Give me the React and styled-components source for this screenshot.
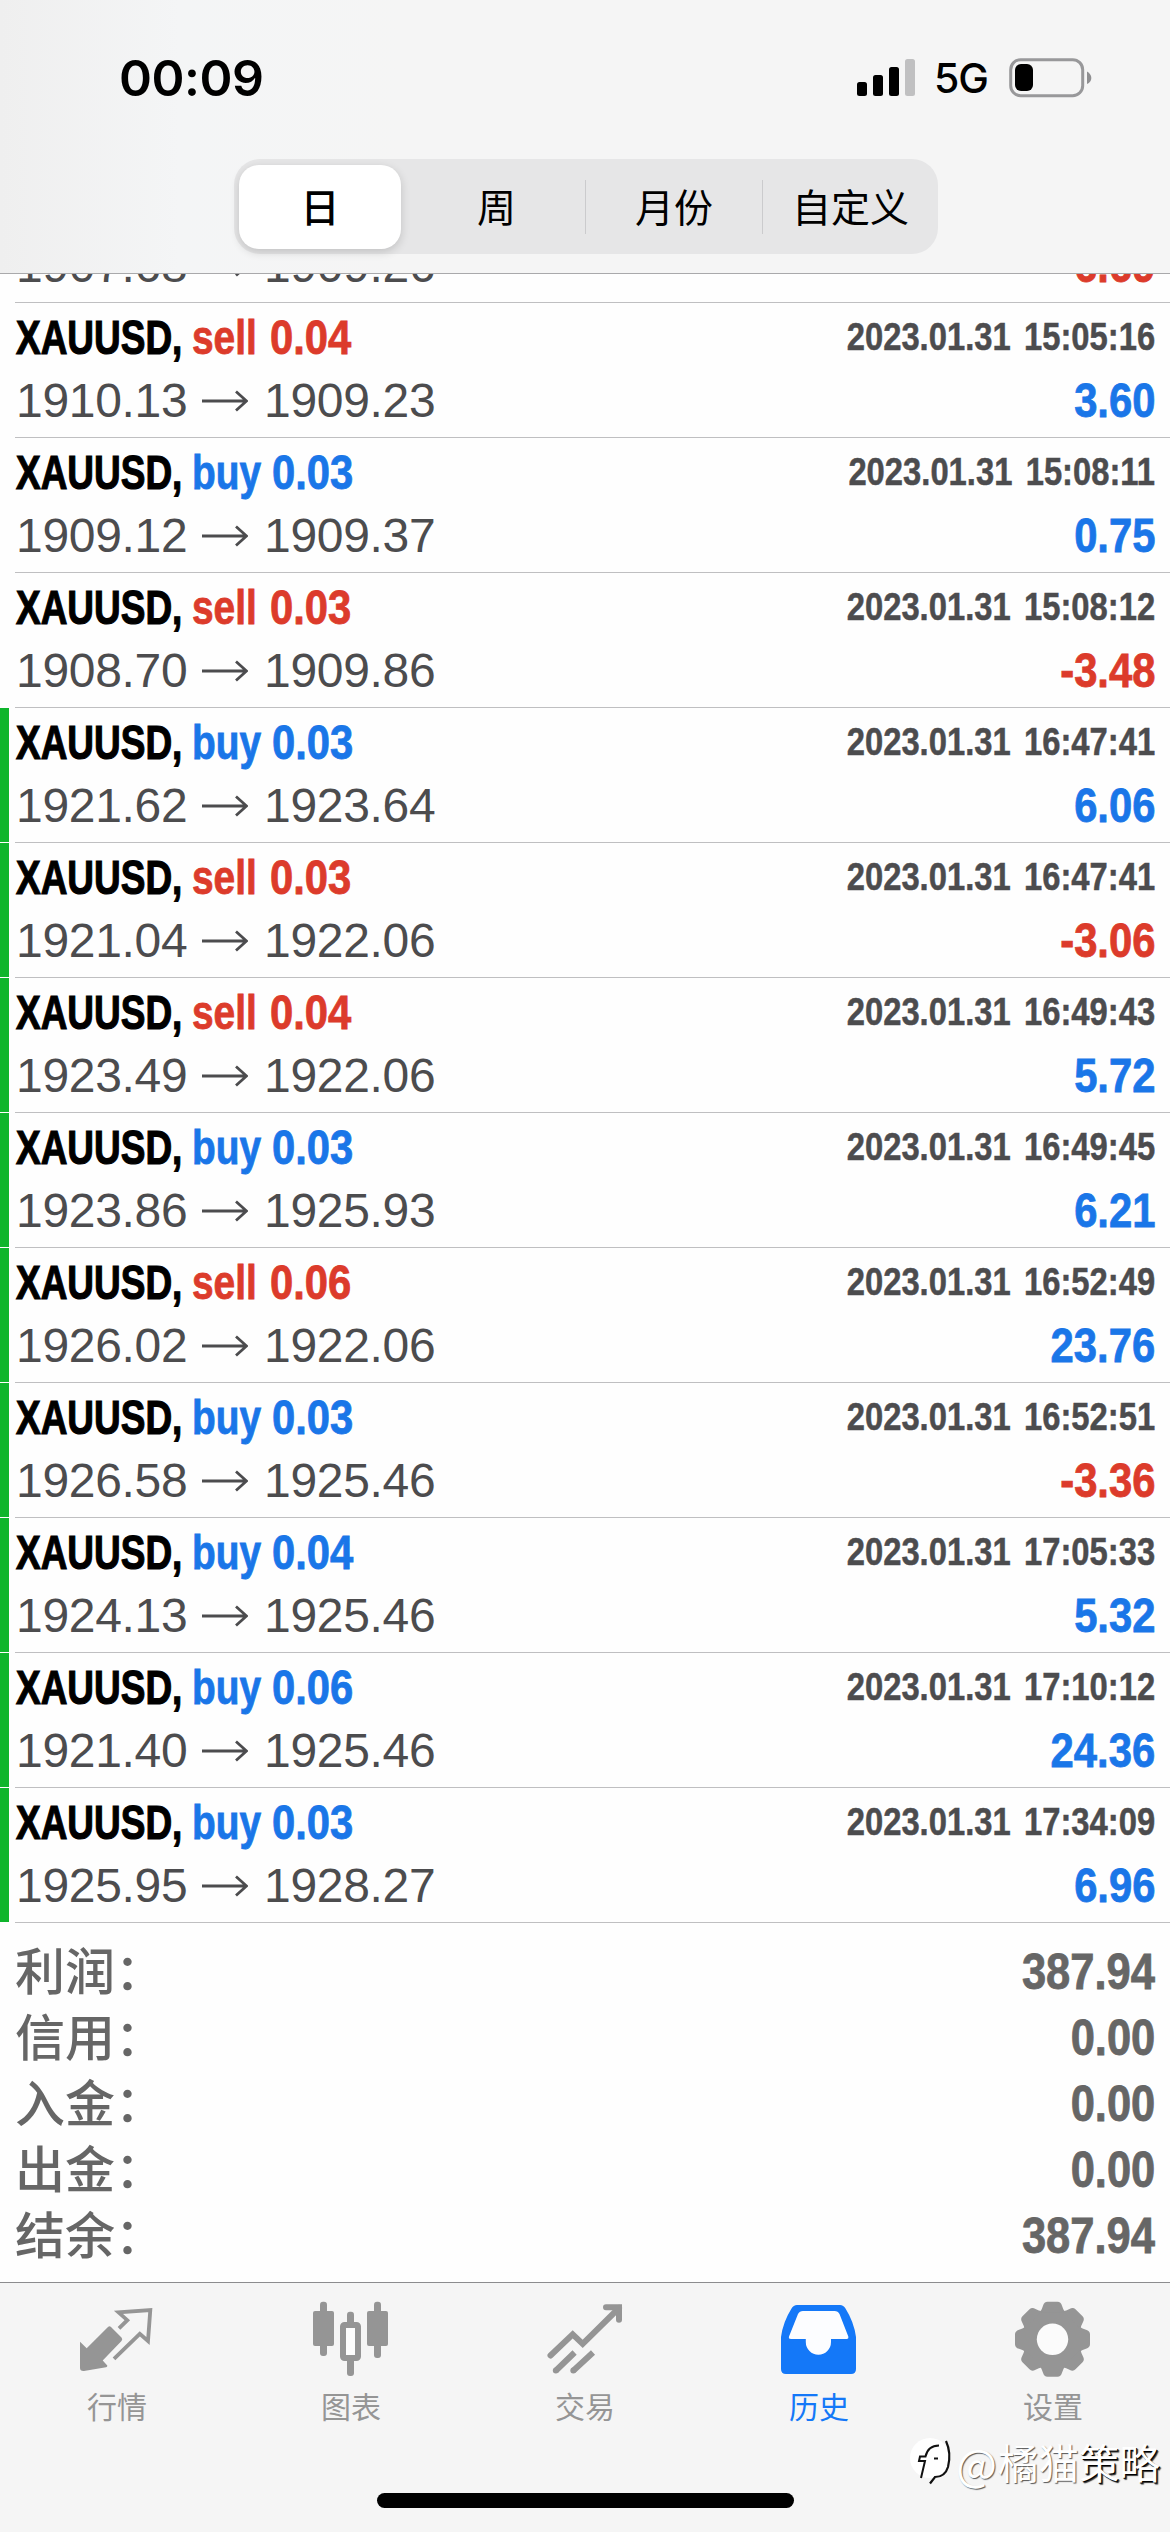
import React from 'react'
import styled, { createGlobalStyle } from 'styled-components'

const BLUE = '#1a76e8'
const RED = '#dc3b2b'

const periods = ['日', '周', '月份', '自定义']

const deals = [
    { side: 'sell', volume: '0.04', open: '1910.13', close: '1909.23', time: '2023.01.31 15:05:16', profit: '3.60' },
    { side: 'buy', volume: '0.03', open: '1909.12', close: '1909.37', time: '2023.01.31 15:08:11', profit: '0.75' },
    { side: 'sell', volume: '0.03', open: '1908.70', close: '1909.86', time: '2023.01.31 15:08:12', profit: '-3.48' },
    { side: 'buy', volume: '0.03', open: '1921.62', close: '1923.64', time: '2023.01.31 16:47:41', profit: '6.06', tp: true },
    { side: 'sell', volume: '0.03', open: '1921.04', close: '1922.06', time: '2023.01.31 16:47:41', profit: '-3.06', tp: true },
    { side: 'sell', volume: '0.04', open: '1923.49', close: '1922.06', time: '2023.01.31 16:49:43', profit: '5.72', tp: true },
    { side: 'buy', volume: '0.03', open: '1923.86', close: '1925.93', time: '2023.01.31 16:49:45', profit: '6.21', tp: true },
    { side: 'sell', volume: '0.06', open: '1926.02', close: '1922.06', time: '2023.01.31 16:52:49', profit: '23.76', tp: true },
    { side: 'buy', volume: '0.03', open: '1926.58', close: '1925.46', time: '2023.01.31 16:52:51', profit: '-3.36', tp: true },
    { side: 'buy', volume: '0.04', open: '1924.13', close: '1925.46', time: '2023.01.31 17:05:33', profit: '5.32', tp: true },
    { side: 'buy', volume: '0.06', open: '1921.40', close: '1925.46', time: '2023.01.31 17:10:12', profit: '24.36', tp: true },
    { side: 'buy', volume: '0.03', open: '1925.95', close: '1928.27', time: '2023.01.31 17:34:09', profit: '6.96', tp: true }
]

const totals = [
    { label: '利润', value: '387.94' },
    { label: '信用', value: '0.00' },
    { label: '入金', value: '0.00' },
    { label: '出金', value: '0.00' },
    { label: '结余', value: '387.94' }
]

const QuotesIcon = () => (
    <Glyph viewBox='0 0 76 78'>
        <path d='M1 41.7 L7.7 48.3 L29 27 Q30.5 25.5 32 27 L42.5 37.5 Q44 39.3 42.5 41 L23.7 60.5 L28.3 65.5 Q28.5 67 27 67.3 L5 71 Q1 71.3 1 68 Z' fill='currentColor' />
        <path d='M40 28.3 L48.3 20.2 L39.5 12.4 L71.3 10 L69 41 L60.8 33.8 L35 58.8' fill='none' stroke='currentColor' strokeWidth='3.8' />
    </Glyph>
)

const ChartIcon = () => (
    <Glyph viewBox='0 0 76 78'>
        <g fill='currentColor'>
            <rect x='0' y='11' width='21' height='35' rx='2' />
            <rect x='7' y='1.7' width='7' height='54.3' rx='3' />
            <rect x='54' y='11' width='21' height='35' rx='2' />
            <rect x='61' y='1.7' width='7' height='56.3' rx='3' />
            <rect x='34' y='11.7' width='7' height='14' rx='3' />
            <rect x='34' y='58' width='7' height='18' rx='3' />
        </g>
        <rect x='30' y='25' width='15' height='33' rx='1.5' fill='#fdfdfd' stroke='currentColor' strokeWidth='6' />
    </Glyph>
)

const TradeIcon = () => (
    <Glyph viewBox='0 0 76 78'>
        <g fill='none' stroke='currentColor' strokeWidth='6'>
            <path d='M3.5 55.5 L25.7 34.3 L35.7 43.8 L72 8' strokeLinecap='round' />
            <path d='M59 7.2 H72 V19.8' strokeLinecap='round' />
            <path d='M9 70.5 L27.6 52.5 M26.5 70.5 L46 52.5' />
        </g>
        <circle cx='8.8' cy='70.6' r='3' fill='currentColor' />
        <circle cx='26.3' cy='70.6' r='3' fill='currentColor' />
    </Glyph>
)

const HistoryIcon = () => (
    <Glyph viewBox='0 0 76 78'>
        <path d='M16 5 H59 Q62.5 5 64.5 8.5 Q73 22 75 37 V69 Q75 74 70 74 H5 Q0 74 0 69 V37 Q2 22 10.5 8.5 Q12.5 5 16 5 Z' fill='currentColor' />
        <path d='M22 11 H53.5 Q57 11 58.5 14 L67.3 36.5 Q67.8 39 65.5 39 H50 V42 A12.6 12.7 0 0 1 24.8 42 V39 H10 Q7.3 39 8 36.5 L17 14 Q18.5 11 22 11 Z' fill='#fcfdff' />
    </Glyph>
)

const SettingsIcon = () => (
    <Glyph viewBox='0 0 76 78'>
        <g transform='translate(37.5 39.3)' fill='currentColor'>
            <circle r='30' />
            {[0, 45, 90, 135, 180, 225, 270, 315].map(angle => (
                <path key={angle} transform={`rotate(${angle})`} d='M-12.5 -27 Q-10.5 -30 -9.5 -33.5 Q-8.4 -37.5 -5 -37.5 H5 Q8.4 -37.5 9.5 -33.5 Q10.5 -30 12.5 -27 Z' />
            ))}
            <circle r='15.7' fill='#fbfbfb' />
        </g>
    </Glyph>
)

const tabs = [
    { label: '行情', Icon: QuotesIcon },
    { label: '图表', Icon: ChartIcon },
    { label: '交易', Icon: TradeIcon },
    { label: '历史', Icon: HistoryIcon, active: true },
    { label: '设置', Icon: SettingsIcon }
]

const Arrow = () => (
    <ArrowSvg viewBox='0 0 46 22'>
        <path d='M0 11 H44 M34 1.5 L44.5 11 L34 20.5' fill='none' stroke='currentColor' strokeWidth='2.8' />
    </ArrowSvg>
)

const Deal = ({ side, volume, open, close, time, profit, tp }) => (
    <DealRow>
        <Marker $tp={tp} />
        <DealBody>
            <Line>
                <Symbol>XAUUSD,</Symbol>
                <Side $side={side}>{side}</Side>
                <Volume $side={side}>{volume}</Volume>
                <Time>{time}</Time>
            </Line>
            <Line>
                <Price>{open}</Price>
                <Arrow />
                <Price>{close}</Price>
                <Profit $loss={profit.startsWith('-')}>{profit}</Profit>
            </Line>
        </DealBody>
    </DealRow>
)

const App = () => (
    <Screen>
        <GlobalStyle />
        <Header>
            <StatusBar>
                <Clock>00:09</Clock>
                <StatusIcons>
                    <SignalSvg viewBox='0 0 58 37'>
                        <rect x='0' y='23' width='10' height='14' rx='2.5' />
                        <rect x='16' y='16' width='10' height='21' rx='2.5' />
                        <rect x='32' y='8' width='10' height='29' rx='2.5' />
                        <rect x='48' y='0' width='10' height='37' rx='2.5' fill='#c0c0c1' />
                    </SignalSvg>
                    <Network>5G</Network>
                    <BatterySvg viewBox='0 0 83 40'>
                        <rect x='1.7' y='1.7' width='72' height='36' rx='10' fill='none' stroke='#98989a' strokeWidth='3' />
                        <rect x='6' y='6' width='18' height='27' rx='6' />
                        <path d='M78 13.5 Q82.3 16 82.3 20 Q82.3 24 78 26 Z' fill='#8f8f91' />
                    </BatterySvg>
                </StatusIcons>
            </StatusBar>
            <Segments>
                {periods.map((period, i) => (
                    <Segment key={period} $active={i === 0} $divided={i > 1}>{period}</Segment>
                ))}
            </Segments>
        </Header>
        <List>
            <CutRow>
                <Line>
                    <Price>1907.68</Price>
                    <Arrow />
                    <Price>1909.26</Price>
                    <Profit $loss>-6.69</Profit>
                </Line>
            </CutRow>
            {deals.map(deal => (
                <Deal key={deal.time + deal.side} {...deal} />
            ))}
        </List>
        <Totals>
            {totals.map(({ label, value }) => (
                <TotalRow key={label}>
                    <TotalLabel>{label}：</TotalLabel>
                    <TotalValue>{value}</TotalValue>
                </TotalRow>
            ))}
        </Totals>
        <TabBar>
            {tabs.map(({ label, Icon, active }) => (
                <Tab key={label} $active={active}>
                    <Icon />
                    <span>{label}</span>
                </Tab>
            ))}
        </TabBar>
        <HomeArea>
            <HomeIndicator />
        </HomeArea>
        <Watermark>
            <WatermarkSvg viewBox='0 0 44 52'>
                <circle cx='21' cy='22' r='20' fill='#fff' />
                <path d='M12 42 L16 25 H10 L11 20.5 H16.5 Q19 9.5 30 9.5 M25 22.5 h4' fill='none' stroke='#111' strokeWidth='2' />
                <path d='M37 5 Q42.5 17 39 31 Q36 41 26 41 L21 47.5' fill='none' stroke='#111' strokeWidth='2.2' />
            </WatermarkSvg>
            <At>@</At>
            <Faint>橘猫</Faint>
            <Strong>策略</Strong>
        </Watermark>
    </Screen>
)

export default App

const GlobalStyle = createGlobalStyle`
    * {
        box-sizing: border-box;
    }

    body {
        margin: 0;
        background: #fefefe;
        font-family: 'Liberation Sans', 'Noto Sans CJK SC', sans-serif;
    }
`

const Screen = styled.div`
    position: relative;
    display: flex;
    flex-direction: column;
    width: 1170px;
    height: 2532px;
    overflow: hidden;
    background: #fefefe;
`

const Header = styled.header`
    flex: none;
    display: flex;
    flex-direction: column;
    align-items: center;
    height: 274px;
    background: linear-gradient(90deg, #efefef 0, #f4f5f6 180px, #f5f5f5 400px);
    border-bottom: 1px solid #a9a9ab;
`

const StatusBar = styled.div`
    display: flex;
    justify-content: space-between;
    align-items: center;
    width: 100%;
    height: 159px;
    padding: 0 78px 4px 119px;
`

const Clock = styled.div`
    font: 600 50px/60px Inter, sans-serif;
    letter-spacing: -0.5px;
`

const StatusIcons = styled.div`
    display: flex;
    align-items: center;
`

const SignalSvg = styled.svg`
    width: 58px;
    height: 37px;
    margin-right: 19px;
`

const Network = styled.div`
    width: 56px;
    margin-right: 19px;
    font: 500 41px/50px Inter, sans-serif;
    letter-spacing: -1px;
`

const BatterySvg = styled.svg`
    width: 83px;
    height: 40px;
`

const Segments = styled.div`
    display: grid;
    grid-template-columns: 162px 184px 177px 176px;
    align-items: center;
    width: 704px;
    height: 95px;
    margin-left: 2px;
    padding-left: 5px;
    border-radius: 26px;
    background: #e6e6e7;
`

const Segment = styled.div`
    display: flex;
    justify-content: center;
    align-items: center;
    height: ${props => (props.$active ? '84px' : '54px')};
    padding-bottom: 3px;
    border-left: ${props => (props.$divided ? '1px solid #cbcbcd' : 'none')};
    border-radius: ${props => (props.$active ? '20px' : '0')};
    background: ${props => (props.$active ? '#fff' : 'transparent')};
    box-shadow: ${props => (props.$active ? '0 3px 10px rgba(0, 0, 0, 0.16)' : 'none')};
    font: ${props => (props.$active ? 500 : 400)} 39px/50px 'Noto Sans CJK SC', sans-serif;

    &:nth-child(2) {
        padding-left: 7px;
    }
`

const List = styled.main`
    flex: none;
    color: #4c4c4e;
`

const Line = styled.div`
    display: flex;
    align-items: center;
    white-space: nowrap;

    &:first-child {
        height: 70px;
    }

    &:last-child {
        height: 56px;
    }
`

const CutRow = styled.div`
    display: flex;
    flex-direction: column;
    justify-content: flex-end;
    height: 29px;
    margin-left: 15px;
    padding: 0 15px 8px 1px;
    overflow: hidden;
    border-bottom: 1px solid #bfbfc1;

    > ${Line} {
        flex: none;
        height: 56px;
    }
`

const DealRow = styled.div`
    display: flex;
    height: 135px;
`

const Marker = styled.div`
    flex: none;
    width: 9px;
    height: 134px;
    margin-right: 6px;
    background: ${props => (props.$tp ? '#0fb52c' : 'transparent')};
`

const DealBody = styled.div`
    flex: 1;
    padding: 0 15px 0 1px;
    border-bottom: 1px solid #bfbfc1;
`

/* Condensed bold: regular-width glyphs squeezed horizontally */
const Condensed = styled.div`
    flex: none;
    font-size: 48px;
    font-weight: 700;
    line-height: 54px;
    transform-origin: left center;
    -webkit-text-stroke: 0.8px currentColor;
`

const Symbol = styled(Condensed)`
    width: 176px;
    color: #000;
    line-height: 70px;
    transform: scaleX(0.77);
    -webkit-text-stroke-width: 1.2px;
`

const Side = styled(Condensed)`
    width: ${props => (props.$side === 'sell' ? '78px' : '80px')};
    color: ${props => (props.$side === 'sell' ? RED : BLUE)};
    line-height: 70px;
    transform: scaleX(0.81);
`

const Volume = styled(Condensed)`
    color: ${props => (props.$side === 'sell' ? RED : BLUE)};
    line-height: 70px;
    transform: scaleX(0.87);
`

const Time = styled(Condensed)`
    margin-left: auto;
    padding-bottom: 2px;
    font-size: 39px;
    line-height: 66px;
    word-spacing: 5px;
    transform-origin: right center;
    transform: scaleX(0.84);
    -webkit-text-stroke-width: 0.5px;
`

const Price = styled.div`
    flex: none;
    width: 186px;
    font-size: 48px;
    line-height: 54px;
    letter-spacing: -0.3px;
`

const ArrowSvg = styled.svg`
    flex: none;
    width: 46px;
    height: 22px;
    margin-right: 16px;
`

const Profit = styled(Condensed)`
    margin-left: auto;
    color: ${props => (props.$loss ? RED : BLUE)};
    transform-origin: right center;
    transform: scaleX(0.87);
`

const Totals = styled.section`
    flex: 1;
    padding: 16px 15px 0;
    color: #666;
`

const TotalRow = styled.div`
    display: flex;
    justify-content: space-between;
    align-items: center;
    height: 66px;
`

const TotalLabel = styled.div`
    padding-bottom: 8px;
    font: 500 50px/60px 'Noto Sans CJK SC', sans-serif;
`

const TotalValue = styled(Condensed)`
    font-size: 50px;
    line-height: 66px;
    transform-origin: right center;
    transform: scaleX(0.87);
`

const TabBar = styled.nav`
    flex: none;
    display: grid;
    grid-template-columns: repeat(5, 1fr);
    height: 158px;
    padding-top: 17px;
    border-top: 1px solid #8c8c8e;
    background: #f5f5f5;
`

const Tab = styled.div`
    display: flex;
    flex-direction: column;
    align-items: center;
    color: ${props => (props.$active ? '#1478f8' : '#959595')};
    font: 400 30px/40px 'Noto Sans CJK SC', sans-serif;

    span {
        margin-top: 7px;
    }
`

const Glyph = styled.svg`
    width: 76px;
    height: 78px;
`

const HomeArea = styled.div`
    flex: none;
    display: flex;
    justify-content: center;
    height: 92px;
    padding-top: 53px;
    background: #f5f5f5;
`

const HomeIndicator = styled.div`
    width: 417px;
    height: 15px;
    border-radius: 8px;
    background: #000;
`

const Watermark = styled.div`
    position: absolute;
    right: 10px;
    bottom: 40px;
    display: flex;
    align-items: center;
    color: #fff;
    font: 400 40.5px/60px 'Noto Sans CJK SC', sans-serif;
`

const WatermarkSvg = styled.svg`
    width: 44px;
    height: 52px;
    margin-right: 3px;
`

const Faint = styled.span`
    text-shadow: 1px 1px 1px #555;
`

const At = styled(Faint)`
    margin-right: 1px;
    font-size: 43px;
`

const Strong = styled.span`
    text-shadow: 1px 1px 0 #000, 2px 2px 1px #333;
`
